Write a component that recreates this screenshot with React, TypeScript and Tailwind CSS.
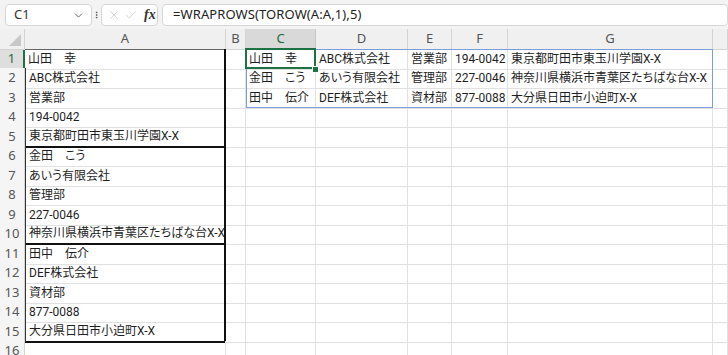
import { ChevronDown, EllipsisVertical, X, Check } from 'lucide-react';

const COLS = ['A', 'B', 'C', 'D', 'E', 'F', 'G', ''];

const LIST = [
  '山田　幸',
  'ABC株式会社',
  '営業部',
  '194-0042',
  '東京都町田市東玉川学園X-X',
  '金田　こう',
  'あいう有限会社',
  '管理部',
  '227-0046',
  '神奈川県横浜市青葉区たちばな台X-X',
  '田中　伝介',
  'DEF株式会社',
  '資材部',
  '877-0088',
  '大分県日田市小迫町X-X',
];

const SPILL = [
  ['山田　幸', 'ABC株式会社', '営業部', '194-0042', '東京都町田市東玉川学園X-X'],
  ['金田　こう', 'あいう有限会社', '管理部', '227-0046', '神奈川県横浜市青葉区たちばな台X-X'],
  ['田中　伝介', 'DEF株式会社', '資材部', '877-0088', '大分県日田市小迫町X-X'],
];

const GRID = 'grid grid-cols-[25px_201px_20px_70px_92px_44px_56px_205px_1fr]';

function FormulaBar() {
  return (
    <div className="flex h-[29px] items-start bg-[#f3f3f3] pl-[5px] pt-[4px]">
      <div className="flex h-[22px] w-[87px] items-center justify-between rounded-[4px] border border-[#d6d6d6] bg-white pl-[8px] pr-[6px]">
        <span className="text-[13px] text-[#333]">C1</span>
        <ChevronDown size={13} strokeWidth={1.6} className="text-[#555]" />
      </div>
      <div className="flex h-[22px] w-[9px] items-center justify-center">
        <EllipsisVertical size={12} strokeWidth={2.4} className="text-[#555]" />
      </div>
      <div className="flex h-[22px] w-[57px] items-center gap-[3px] rounded-[4px] border border-[#d6d6d6] bg-white pl-[5px]">
        <X size={14} strokeWidth={1.2} className="text-[#c4c4c4]" />
        <Check size={14} strokeWidth={1.2} className="text-[#c4c4c4]" />
        <span className="ml-[3px] font-['Liberation_Serif',serif] text-[14px] font-bold italic leading-none text-[#333]">
          fx
        </span>
      </div>
      <div className="ml-[4px] flex h-[22px] flex-1 items-center rounded-[4px] border border-[#d6d6d6] bg-white pl-[10px]">
        <span className="text-[13px] tracking-[0.1px] text-[#222]">=WRAPROWS(TOROW(A:A,1),5)</span>
      </div>
    </div>
  );
}

function HeaderRow() {
  return (
    <div className={`${GRID} h-[20px] bg-[#f0f0f0] font-['Noto_Sans',sans-serif]`}>
      <div className="relative border-r border-b border-[#d4d4d4]">
        <div className="absolute bottom-[3px] right-[3px] h-0 w-0 border-b-[12px] border-l-[12px] border-b-[#c8c8c8] border-l-transparent" />
      </div>
      {COLS.map((c, i) => (
        <div
          key={i}
          className={`flex items-center justify-center border-r border-b text-[13px] ${
            c === 'C'
              ? 'border-[#c6c6c6] bg-[#d9d9d9] text-[#1b6b40]'
              : 'border-[#d4d4d4] text-[#555]'
          } ${c === 'A' ? 'border-b-[#666]' : ''}`}
        >
          {c}
        </div>
      ))}
    </div>
  );
}

function Cell({ text, className = '' }: { text?: string; className?: string }) {
  return (
    <div className={`relative flex items-center whitespace-nowrap border-r border-b border-[#e1e1e1] pl-[3px] ${className}`}>
      {text && <span className="relative z-[1]">{text}</span>}
    </div>
  );
}

function DataRow({ n }: { n: number }) {
  const height = n % 2 === 1 ? 'h-[19px]' : 'h-[20px]';
  const a = LIST[n - 1];
  const spill = SPILL[n - 1];
  const groupEnd = n === 5 || n === 10 || n === 15;
  const inList = n <= 15;
  const selected = n === 1;

  return (
    <div className={`${GRID} ${height}`}>
      <div
        className={`flex items-center justify-center border-b border-[#e1e1e1] font-['Noto_Sans',sans-serif] text-[13px] ${
          selected
            ? 'border-r-2 border-r-[#1e7145] bg-[#dedede] text-[#1b6b40]'
            : 'border-r border-r-[#d4d4d4] bg-[#f5f5f5] text-[#555]'
        }`}
      >
        {n}
      </div>
      <Cell
        text={a}
        className={
          inList
            ? `border-r-2 border-r-[#111] ${selected ? '' : 'border-l border-l-[#333]'} ${
                groupEnd ? 'border-b-2 border-b-[#111]' : ''
              }`
            : ''
        }
      />
      <Cell />
      <div className="relative flex items-center whitespace-nowrap border-r border-b border-[#e1e1e1] pl-[3px]">
        {spill && <span>{spill[0]}</span>}
        {selected && (
          <>
            <div className="absolute -left-px -top-px z-[3] h-[21px] w-[71px] border-2 border-[#1e7145]" />
            <div className="absolute -bottom-[4px] -right-[4px] z-[4] h-[7px] w-[7px] border border-white bg-[#1e7145]" />
          </>
        )}
      </div>
      <Cell text={spill?.[1]} />
      <Cell text={spill?.[2]} />
      <Cell text={spill?.[3]} />
      <Cell text={spill?.[4]} />
      <Cell />
    </div>
  );
}

export default function App() {
  const rows = Array.from({ length: 16 }, (_, i) => i + 1);
  return (
    <div className="h-[355px] w-[728px] overflow-hidden bg-white font-['Noto_Sans',sans-serif] text-[#1f1f1f]">
      <FormulaBar />
      <div className="relative font-['Roboto','Noto_Sans_CJK_JP',sans-serif] text-[12px] [font-feature-settings:'palt']">
        <HeaderRow />
        {rows.map((n) => (
          <DataRow key={n} n={n} />
        ))}
        <div className="pointer-events-none absolute left-[246px] top-[20px] z-[2] h-[59px] w-[467px] border border-[#7b9ed8]" />
      </div>
    </div>
  );
}
